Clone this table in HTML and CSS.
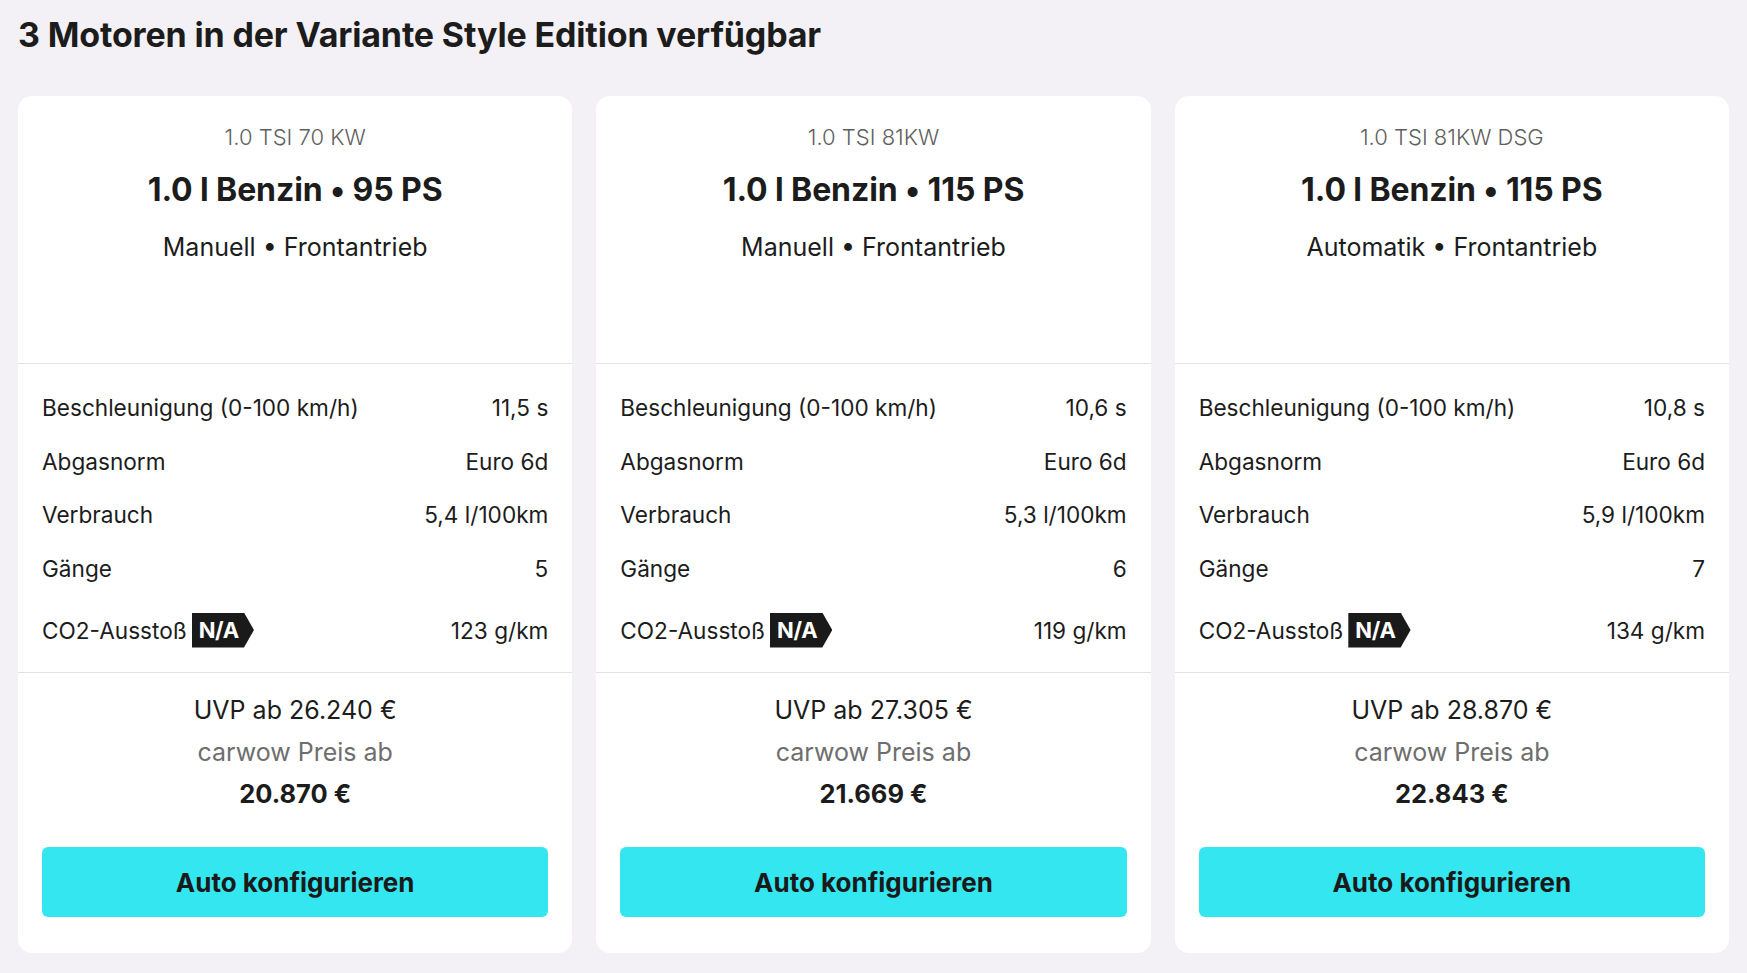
FILE: index.html
```html
<!DOCTYPE html>
<html lang="de">
<head>
    <meta charset="UTF-8">
    <title>Motoren - Style Edition</title>
    <link rel="stylesheet" href="styles.css">
</head>
<body>
    <div class="page">
        <h1>3 Motoren in der Variante Style Edition verfügbar</h1>

        <div class="cards">
            <div class="card">
                <div class="card-head">
                    <div class="engine-code">1.0 TSI 70 KW</div>
                    <div class="engine-title">1.0 l Benzin • 95 PS</div>
                    <div class="engine-drive">Manuell • Frontantrieb</div>
                </div>
                <div class="specs">
                    <div class="spec-row"><span>Beschleunigung (0-100 km/h)</span><span>11,5 s</span></div>
                    <div class="spec-row"><span>Abgasnorm</span><span>Euro 6d</span></div>
                    <div class="spec-row"><span>Verbrauch</span><span>5,4 l/100km</span></div>
                    <div class="spec-row"><span>Gänge</span><span>5</span></div>
                    <div class="spec-row co2"><span class="co2-label">CO2-Ausstoß <span class="badge">N/A</span></span><span>123 g/km</span></div>
                </div>
                <div class="pricing">
                    <div class="uvp">UVP ab 26.240 €</div>
                    <div class="price-label">carwow Preis ab</div>
                    <div class="price">20.870 €</div>
                    <button class="cta">Auto konfigurieren</button>
                </div>
            </div>

            <div class="card">
                <div class="card-head">
                    <div class="engine-code">1.0 TSI 81KW</div>
                    <div class="engine-title">1.0 l Benzin • 115 PS</div>
                    <div class="engine-drive">Manuell • Frontantrieb</div>
                </div>
                <div class="specs">
                    <div class="spec-row"><span>Beschleunigung (0-100 km/h)</span><span>10,6 s</span></div>
                    <div class="spec-row"><span>Abgasnorm</span><span>Euro 6d</span></div>
                    <div class="spec-row"><span>Verbrauch</span><span>5,3 l/100km</span></div>
                    <div class="spec-row"><span>Gänge</span><span>6</span></div>
                    <div class="spec-row co2"><span class="co2-label">CO2-Ausstoß <span class="badge">N/A</span></span><span>119 g/km</span></div>
                </div>
                <div class="pricing">
                    <div class="uvp">UVP ab 27.305 €</div>
                    <div class="price-label">carwow Preis ab</div>
                    <div class="price">21.669 €</div>
                    <button class="cta">Auto konfigurieren</button>
                </div>
            </div>

            <div class="card">
                <div class="card-head">
                    <div class="engine-code">1.0 TSI 81KW DSG</div>
                    <div class="engine-title">1.0 l Benzin • 115 PS</div>
                    <div class="engine-drive">Automatik • Frontantrieb</div>
                </div>
                <div class="specs">
                    <div class="spec-row"><span>Beschleunigung (0-100 km/h)</span><span>10,8 s</span></div>
                    <div class="spec-row"><span>Abgasnorm</span><span>Euro 6d</span></div>
                    <div class="spec-row"><span>Verbrauch</span><span>5,9 l/100km</span></div>
                    <div class="spec-row"><span>Gänge</span><span>7</span></div>
                    <div class="spec-row co2"><span class="co2-label">CO2-Ausstoß <span class="badge">N/A</span></span><span>134 g/km</span></div>
                </div>
                <div class="pricing">
                    <div class="uvp">UVP ab 28.870 €</div>
                    <div class="price-label">carwow Preis ab</div>
                    <div class="price">22.843 €</div>
                    <button class="cta">Auto konfigurieren</button>
                </div>
            </div>
        </div>
    </div>
</body>
</html>
```

FILE: styles.css
```css
body {
    margin: 0;
    background: #f3f1f6;
    font-family: Inter, Roboto, "Liberation Sans", sans-serif;
    color: #1c1c1c;
}
.page {
    padding: 14px 18px 20px;
}
h1 {
    margin: 0 0 41px;
    font-size: 34px;
    line-height: 41px;
    font-weight: 700;
    letter-spacing: -0.15px;
}
.cards {
    display: grid;
    grid-template-columns: repeat(3, 1fr);
    gap: 24px;
}
.card {
    background: #fff;
    border-radius: 14px;
    overflow: hidden;
}
.card-head {
    height: 268px;
    box-sizing: border-box;
    padding-top: 27px;
    text-align: center;
    border-bottom: 1px solid #e3e1e7;
}
.engine-code {
    font-size: 22px;
    line-height: 28px;
    font-weight: 300;
    color: #5f5f5f;
}
.engine-title {
    margin-top: 19px;
    font-size: 32px;
    line-height: 40px;
    font-weight: 700;
    letter-spacing: -0.1px;
}
.engine-drive {
    margin-top: 21px;
    font-size: 25px;
    line-height: 32px;
}
.specs {
    padding: 17px 24px 7px;
    border-bottom: 1px solid #e3e1e7;
}
.spec-row {
    display: flex;
    justify-content: space-between;
    align-items: center;
    height: 53.5px;
    font-size: 22.6px;
}
.spec-row.co2 {
    height: 70px;
}
.co2-label {
    display: flex;
    align-items: center;
    gap: 5px;
}
.badge {
    display: inline-block;
    height: 35px;
    line-height: 35px;
    padding: 0 15px 0 7px;
    background: #1a1a1a;
    color: #fff;
    font-weight: 700;
    font-size: 22px;
    letter-spacing: -0.3px;
    clip-path: polygon(0 0, 84% 0, 100% 50%, 84% 100%, 0 100%);
}
.pricing {
    padding: 16px 24px 36px;
    text-align: center;
    font-size: 25px;
    line-height: 42px;
}
.price-label {
    color: #6e6e6e;
}
.price {
    font-weight: 700;
    font-size: 25.5px;
}
.cta {
    display: block;
    width: 100%;
    height: 70px;
    margin-top: 32px;
    border: none;
    border-radius: 6px;
    background: #33e6f0;
    color: #1a1a1a;
    font-family: inherit;
    font-size: 26px;
    font-weight: 700;
    cursor: pointer;
}
```
